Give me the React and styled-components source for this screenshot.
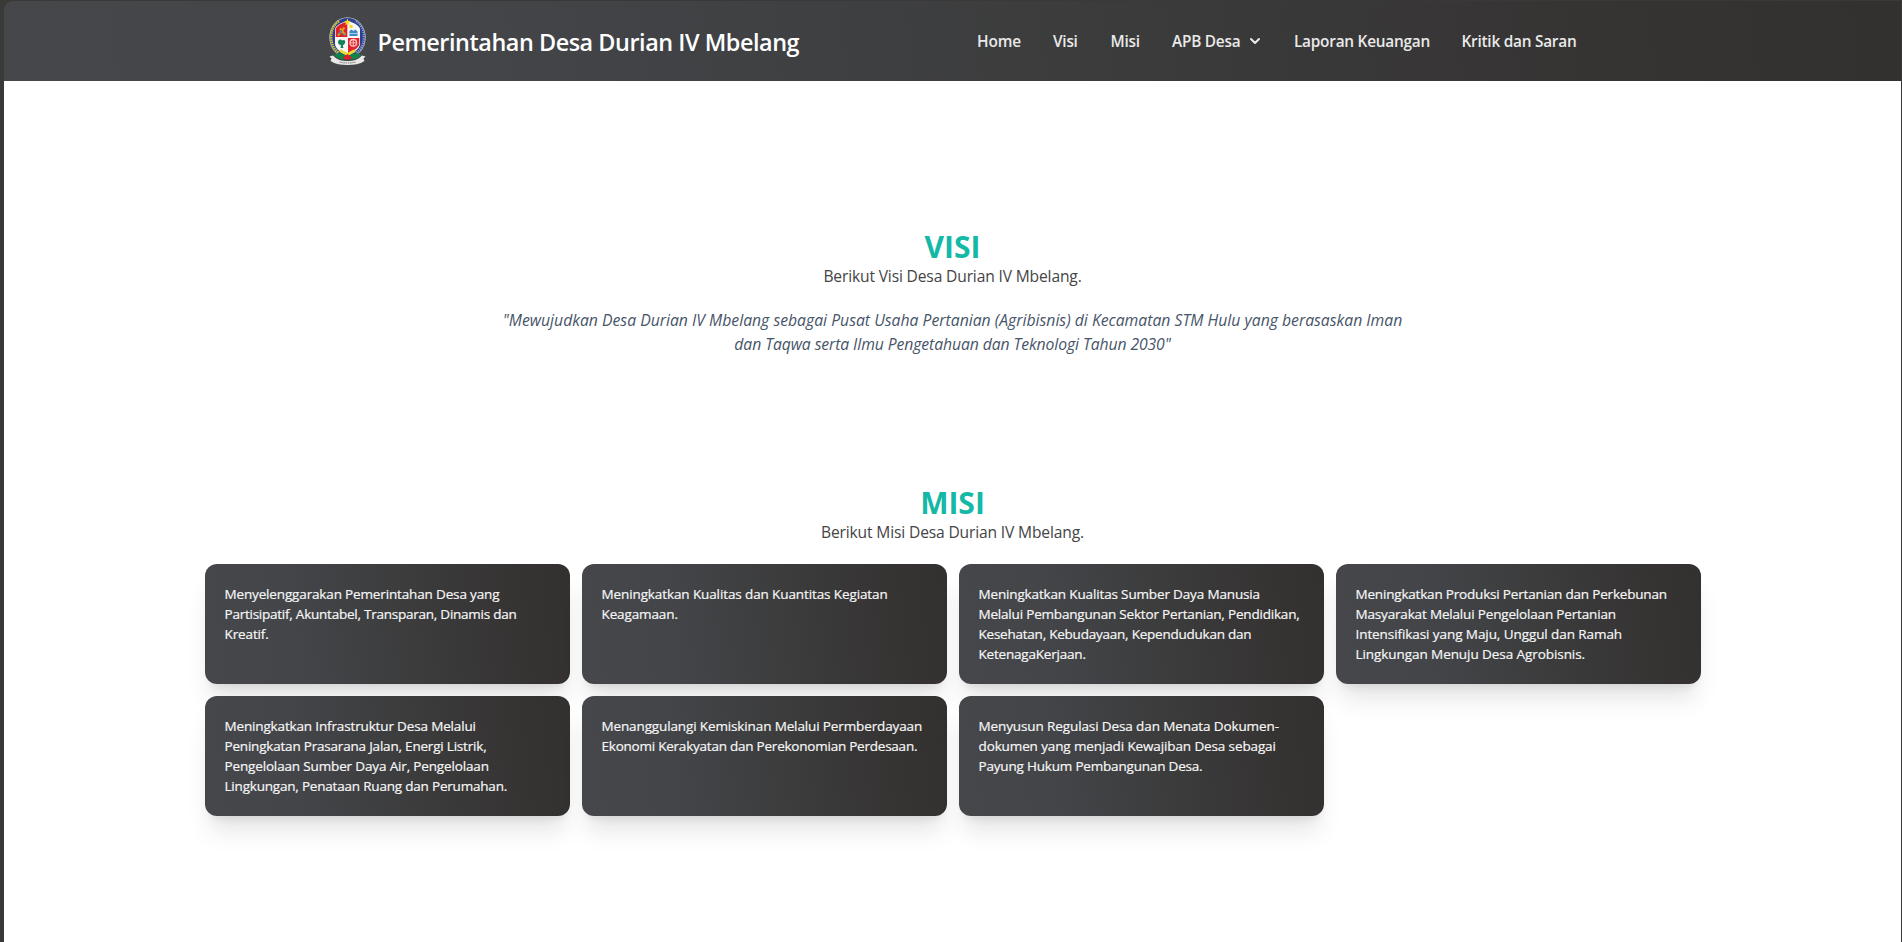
import React from "react";
import styled, { createGlobalStyle } from "styled-components";

const gradient = "linear-gradient(83deg, #46474b 0%, #434549 25%, #3b3b3b 60%, #363333 84%, #33312f 100%)";

const GlobalStyle = createGlobalStyle`
  *, *::before, *::after { box-sizing: border-box; }
  body {
    margin: 0;
    background: #393938;
    font-family: "Open Sans", "Noto Sans", sans-serif;
    overflow: hidden;
  }
  h1, h2, p { margin: 0; }
`;

const Page = styled.div`
  height: 942px;
  padding: 1px 1px 0 4px;
`;

const Header = styled.header`
  height: 80px;
  display: flex;
  justify-content: center;
  background: ${gradient};
  border-top-left-radius: 9px;
`;

const HeaderInner = styled.div`
  width: 1248px;
  display: flex;
  align-items: center;
  justify-content: space-between;
`;

const Brand = styled.a`
  display: flex;
  align-items: center;
  gap: 12px;
  color: #fff;
`;

const BrandName = styled.span`
  padding-top: 2px;
  font: 600 23.4px/32px "Open Sans", sans-serif;
  letter-spacing: -0.45px;
  white-space: nowrap;
`;

const Nav = styled.nav`
  display: flex;
  align-items: center;
  gap: 32px;
  padding-top: 2px;
`;

const NavLink = styled.a`
  display: flex;
  align-items: center;
  gap: 9px;
  width: ${(p) => p.$width}px;
  font-size: 15.4px;
  line-height: 24px;
  font-weight: 600;
  letter-spacing: ${(p) => p.$track || -0.25}px;
  color: #e9eaea;
  white-space: nowrap;
`;

const Main = styled.main`
  height: 861px;
  background: #fff;
  padding-top: 83px;
`;

const Section = styled.section`
  padding: 64px 0;
  display: flex;
  flex-direction: column;
  align-items: center;
`;

const Title = styled.h2`
  height: 36px;
  padding-top: 1px;
  font-size: 30px;
  line-height: 36px;
  font-weight: 700;
  color: #14b8a6;
`;

const Subtitle = styled.p`
  font-size: 15.6px;
  line-height: 24px;
  letter-spacing: -0.15px;
  color: #444;
`;

const Quote = styled.p`
  margin-top: 20px;
  font-size: 15.75px;
  line-height: 24px;
  font-style: italic;
  text-align: center;
  color: #475569;
`;

const QuoteLine = styled.span`
  display: block;
  white-space: nowrap;
  letter-spacing: ${(p) => p.$track}px;
`;

const Cards = styled.div`
  margin-top: 20px;
  display: grid;
  grid-template-columns: repeat(4, 365px);
  grid-auto-rows: 120px;
  gap: 12px;
`;

const Card = styled.article`
  padding: 20px 18px 20px 20px;
  border-radius: 12px;
  background: ${gradient};
  box-shadow: 0 20px 25px -5px rgba(0, 0, 0, 0.1), 0 8px 10px -6px rgba(0, 0, 0, 0.1);
  color: #f6f6f6;
  font-size: 13.5px;
  line-height: 20px;
  -webkit-text-stroke: 0.2px #f6f6f6;
`;

const CardLine = styled.span`
  display: block;
  white-space: nowrap;
  letter-spacing: ${(p) => p.$track}px;
`;

const Emblem = () => (
  <svg width="37" height="48" viewBox="0 0 37 48" aria-hidden="true">
    <ellipse cx="18.5" cy="20.5" rx="18.2" ry="20.2" fill="#b9bdc9" />
    <ellipse cx="18.5" cy="20.5" rx="17.4" ry="19.6" fill="#2f3f8f" />
    <path d="M10 4.200C4 8 1.800 14 2.200 21.500C2.500 28 5.500 33 10 36" fill="none" stroke="#c9c43c" strokeWidth="2.600" strokeDasharray="1.600 .7" />
    <path d="M27 4.200C33 8 35.200 14 34.800 21.500C34.500 28 31.500 33 27 36" fill="none" stroke="#8fa6c8" strokeWidth="2.200" strokeDasharray="1.200 1" />
    <path d="M18.500 4.500C12.500 5 8.500 7.500 6 11.500V27C6.500 32 12 35.500 18.500 38.500C25 35.500 30.500 32 31 27V11.500C28.500 7.500 24.500 5 18.500 4.500Z" fill="#f7f7f7" />
    <path d="M18.300 5C13 5.500 9 8 6.700 11.500V20H18.300Z" fill="#df2027" />
    <path d="M19 21H30.300V27C29.500 31 25 34 19 36.500Z" fill="#e3222b" />
    <path d="M9 18.500L15.500 10.500M11 11.500L16.500 18" stroke="#e6a01c" strokeWidth="2" />
    <path d="M10 17L13 13.500M13.500 17.500H16" stroke="#3c86b8" strokeWidth="1.500" />
    <path d="M20.500 19V14L22.500 12.500L24.500 14L26.500 12.500L28.500 14.500V19Z" fill="#3f86c6" />
    <path d="M20.500 16.500H28.500" stroke="#a6d3ee" strokeWidth="1" />
    <circle cx="22" cy="9.500" r="1.800" fill="#f1dc2c" />
    <path d="M18.500 1.500L19.500 4L22 4.200L20 5.800L20.700 8.200L18.500 6.900L16.300 8.200L17 5.800L15 4.200L17.500 4Z" fill="#f6df25" />
    <path d="M9 25C9 22.500 12 21.500 13 23.500C15 22 17 23.500 16 26C15.500 28 14 27.500 13.800 28.500L14.500 31H11.500L12 28C10 28 9 27 9 25Z" fill="#16805a" />
    <circle cx="24.300" cy="25.800" r="3.300" fill="none" stroke="#f8c9cb" strokeWidth="1.300" />
    <path d="M24.300 22.500V29.100M21 25.800H27.600" stroke="#f8c9cb" strokeWidth=".9" />
    <path d="M11 33.500L18.500 37.500L26 33.500" fill="none" stroke="#eadb2d" strokeWidth="3" />
    <path d="M5 38C9 35 14 36 18.500 40C23 36 28 35 32 38C29 42 23 43.500 18.500 41.500C14 43.500 8 42 5 38Z" fill="#118449" />
    <path d="M14 40.500L18.500 37L23 40.500L21 42.500H16Z" fill="#dd2027" />
    <path d="M.5 39.500L4 38.500C8 43 13 44 18.500 44C24 44 29 43 33 38.500L36.500 39.500L34.500 41.500L35.500 44C31 47 25 48 18.500 48C12 48 6 47 1.500 44L2.500 41.500Z" fill="#e8e8e8" />
    <path d="M10.500 45C15 46.300 22 46.300 26.500 45" fill="none" stroke="#8a8a8a" strokeWidth="1.300" strokeDasharray="1.400 .7" />
  </svg>
);

const Chevron = () => (
  <svg width="12" height="10" viewBox="0 0 12 10" aria-hidden="true">
    <path d="M2 2L6 6L10 2" fill="none" stroke="#e9eaea" strokeWidth="2" strokeLinecap="round" strokeLinejoin="round" />
  </svg>
);

const links = [
  { label: "Home", width: 44, track: -0.1 },
  { label: "Visi", width: 25.5 },
  { label: "Misi", width: 29.5 },
  { label: "APB Desa", width: 90, menu: true },
  { label: "Laporan Keuangan", width: 135.5 },
  { label: "Kritik dan Saran", width: 115 },
];

const missions = [
  [["Menyelenggarakan Pemerintahan Desa yang", -0.15], ["Partisipatif, Akuntabel, Transparan, Dinamis dan", -0.24], ["Kreatif.", -0.12]],
  [["Meningkatkan Kualitas dan Kuantitas Kegiatan", -0.11], ["Keagamaan.", -0.12]],
  [["Meningkatkan Kualitas Sumber Daya Manusia", -0.15], ["Melalui Pembangunan Sektor Pertanian, Pendidikan,", -0.19], ["Kesehatan, Kebudayaan, Kependudukan dan", -0.23], ["KetenagaKerjaan.", -0.2]],
  [["Meningkatkan Produksi Pertanian dan Perkebunan", -0.19], ["Masyarakat Melalui Pengelolaan Pertanian", -0.17], ["Intensifikasi yang Maju, Unggul dan Ramah", -0.08], ["Lingkungan Menuju Desa Agrobisnis.", -0.07]],
  [["Meningkatkan Infrastruktur Desa Melalui", -0.15], ["Peningkatan Prasarana Jalan, Energi Listrik,", -0.2], ["Pengelolaan Sumber Daya Air, Pengelolaan", -0.15], ["Lingkungan, Penataan Ruang dan Perumahan.", -0.2]],
  [["Menanggulangi Kemiskinan Melalui Permberdayaan", -0.13], ["Ekonomi Kerakyatan dan Perekonomian Perdesaan.", -0.23]],
  [["Menyusun Regulasi Desa dan Menata Dokumen-", -0.11], ["dokumen yang menjadi Kewajiban Desa sebagai", -0.12], ["Payung Hukum Pembangunan Desa.", -0.19]],
];

export default function App() {
  return (
    <Page>
      <GlobalStyle />
      <Header>
        <HeaderInner>
          <Brand>
            <Emblem />
            <BrandName>Pemerintahan Desa Durian IV Mbelang</BrandName>
          </Brand>
          <Nav>
            {links.map((l) => (
              <NavLink key={l.label} $width={l.width} $track={l.track}>
                {l.label}
                {l.menu && <Chevron />}
              </NavLink>
            ))}
          </Nav>
        </HeaderInner>
      </Header>
      <Main>
        <Section>
          <Title>VISI</Title>
          <Subtitle>Berikut Visi Desa Durian IV Mbelang.</Subtitle>
          <Quote>
            <QuoteLine $track={0}>
              "Mewujudkan Desa Durian IV Mbelang sebagai Pusat Usaha Pertanian (Agribisnis) di Kecamatan STM Hulu yang berasaskan Iman
            </QuoteLine>
            <QuoteLine $track={-0.1}>dan Taqwa serta Ilmu Pengetahuan dan Teknologi Tahun 2030"</QuoteLine>
          </Quote>
        </Section>
        <Section>
          <Title>MISI</Title>
          <Subtitle>Berikut Misi Desa Durian IV Mbelang.</Subtitle>
          <Cards>
            {missions.map((lines) => (
              <Card key={lines[0][0]}>
                {lines.map(([text, track]) => (
                  <CardLine key={text} $track={track}>{text}</CardLine>
                ))}
              </Card>
            ))}
          </Cards>
        </Section>
      </Main>
    </Page>
  );
}
